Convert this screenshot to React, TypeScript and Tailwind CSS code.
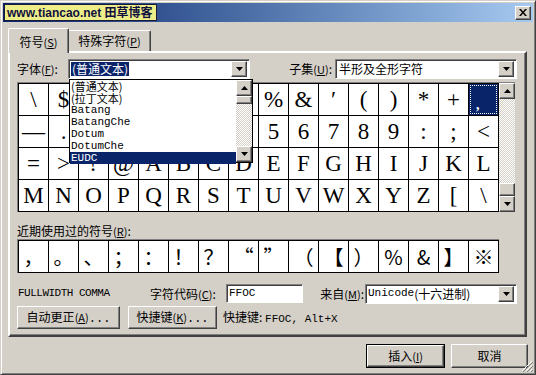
import React from 'react';

const cjk = "font-['Noto_Sans_CJK_SC',sans-serif]";
const mono = "font-['Liberation_Mono',monospace]";
const serif = "font-['Liberation_Serif',serif]";

const raised = 'border border-t-white border-l-white border-r-[#404040] border-b-[#404040] shadow-[inset_-1px_-1px_#808080]';
const sunken = 'border border-t-[#808080] border-l-[#808080] border-r-white border-b-white shadow-[inset_1px_1px_#404040]';
const checker = 'bg-[repeating-conic-gradient(#d4d0c8_0_25%,#ffffff_0_50%)] bg-[length:2px_2px]';

const rows = [
    ['\\', '$', '%', '@', '!', '"', '#', '$', '%', '&', '′', '(', ')', '*', '+', ','],
    ['—', '.', '/', '0', '1', '2', '3', '4', '5', '6', '7', '8', '9', ':', ';', '<'],
    ['=', '>', '?', '@', 'A', 'B', 'C', 'D', 'E', 'F', 'G', 'H', 'I', 'J', 'K', 'L'],
    ['M', 'N', 'O', 'P', 'Q', 'R', 'S', 'T', 'U', 'V', 'W', 'X', 'Y', 'Z', '[', '\\'],
];

const recent = ['，', '。', '、', '；', '：', '！', '？', '“', '”', '（', '【', '）', '%', '&', '】', '※'];

const fonts = ['(普通文本)', '(拉丁文本)', 'Batang', 'BatangChe', 'Dotum', 'DotumChe', 'EUDC'];

function Arrow({ dir }: { dir: 'up' | 'down' }) {
    return (
        <svg width="7" height="4" viewBox="0 0 7 4">
            {dir === 'down' ? <path d="M0 0h7L3.5 4z" fill="#000" /> : <path d="M0 4h7L3.5 0z" fill="#000" />}
        </svg>
    );
}

function ArrowBtn({ dir, className = '' }: { dir: 'up' | 'down'; className?: string }) {
    return (
        <div className={`w-[16px] h-[16px] bg-[#d4d0c8] flex items-center justify-center shrink-0 ${raised} ${className}`}>
            <Arrow dir={dir} />
        </div>
    );
}

function Acc({ k }: { k: string }) {
    return (
        <span className="text-[11px]">
            (<span className="underline">{k}</span>)
        </span>
    );
}

function Select({ width, children }: { width: string; children: React.ReactNode }) {
    return (
        <div className={`${width} h-[20px] bg-white flex items-center pl-[2px] pr-[2px] ${sunken}`}>
            <div className="flex-1 flex items-center whitespace-nowrap">{children}</div>
            <ArrowBtn dir="down" />
        </div>
    );
}

function Button({ width, children, isDefault = false }: { width: string; children: React.ReactNode; isDefault?: boolean }) {
    return (
        <div className={`${width} ${isDefault ? 'border border-black' : ''}`}>
            <div className={`h-full flex items-center justify-center bg-[#d4d0c8] ${raised}`}>{children}</div>
        </div>
    );
}

export default function App() {
    return (
        <div className={`relative w-[536px] h-[375px] bg-[#d4d0c8] overflow-hidden text-[12px] text-black ${cjk} border border-t-[#d4d0c8] border-l-[#d4d0c8] border-r-[#404040] border-b-[#404040] shadow-[inset_1px_1px_#fff,inset_-1px_-1px_#808080]`}>
            {/* title bar */}
            <div className="mt-[2px] mx-[2px] h-[19px] bg-linear-to-r from-[#0a246a] to-[#a6caf0] flex items-center justify-between">
                <div className="ml-[1px] h-[17px] w-[153px] bg-[#eeee88] border border-[#1a1a3a] flex items-center pl-[2px]">
                    <span className="whitespace-nowrap text-[12px] font-bold text-[#101040] leading-none font-['Liberation_Sans','Noto_Sans_CJK_SC',sans-serif]">www.tiancao.net 田草博客</span>
                </div>
                <div className={`mr-[2px] w-[16px] h-[14px] bg-[#d4d0c8] flex items-center justify-center ${raised}`}>
                    <svg width="8" height="7" viewBox="0 0 8 7">
                        <path d="M0 0h2l2 2.5L6 0h2L5 3.5 8 7H6L4 4.5 2 7H0l3-3.5z" fill="#000" />
                    </svg>
                </div>
            </div>

            {/* tabs */}
            <div className="pl-[7px] pt-[6px] flex items-end h-[29px]">
                <div className="relative z-10 -mb-[2px] h-[25px] w-[61px] bg-[#d4d0c8] border-t border-l border-t-white border-l-white border-r border-r-[#404040] shadow-[inset_-1px_0_#808080] rounded-t-[2px] flex items-start justify-center pt-[4px]">
                    <span>符号<Acc k="S" /></span>
                </div>
                <div className="h-[21px] w-[82px] border-t border-t-white border-r border-r-[#404040] shadow-[inset_-1px_0_#808080] rounded-tr-[2px] flex items-center justify-center">
                    <span>特殊字符<Acc k="P" /></span>
                </div>
            </div>

            {/* panel */}
            <div className="relative ml-[7px] w-[519px] h-[286px] border-2 border-t-white border-l-white border-r-[#404040] border-b-[#404040] shadow-[inset_-1px_-1px_#808080] pl-[7px] pr-[8px] pt-[6px] flex flex-col">
                <div className="flex items-center h-[20px]">
                    <span className="w-[51px]">字体<Acc k="F" />:</span>
                    <Select width="w-[182px]">
                        <span className="bg-[#0a246a] text-white px-[1px] leading-[14px]">(普通文本)</span>
                    </Select>
                    <span className="ml-auto mr-[3px]">子集<Acc k="U" />:</span>
                    <Select width="w-[182px]">
                        <span className="pl-[1px]">半形及全形字符</span>
                    </Select>
                </div>

                {/* symbol grid */}
                <div className="flex mt-[3px]">
                    <div className="border-l border-t border-[#808080]">
                        <div className={`border-l border-t border-black ${serif}`}>
                            {rows.map((row, r) => (
                                <div key={r} className="flex">
                                    {row.map((ch, c) => {
                                        const sel = r === 0 && c === 15;
                                        return sel ? (
                                            <div key={c} className="w-[30px] h-[32px] border-r border-b border-black bg-[#0a246a] p-[1px]">
                                                <div className="w-full h-full border border-dotted border-white flex items-end pl-[5px] pb-[1px]">
                                                    <span className="text-white text-[14px] font-bold leading-none">,</span>
                                                </div>
                                            </div>
                                        ) : (
                                            <div key={c} className="w-[30px] h-[32px] border-r border-b border-black bg-white flex items-center justify-center text-[23px] leading-none">
                                                {ch}
                                            </div>
                                        );
                                    })}
                                </div>
                            ))}
                        </div>
                    </div>
                    <div className="w-[16px] flex flex-col border-t border-[#808080]">
                        <ArrowBtn dir="up" />
                        <div className={`flex-1 ${checker}`} />
                        <div className={`h-[13px] bg-[#d4d0c8] ${raised}`} />
                        <ArrowBtn dir="down" />
                    </div>
                </div>

                <div className="mt-[11px] h-[15px] leading-[15px]">近期使用过的符号<Acc k="R" />:</div>

                <div className="mt-[1px] flex">
                    <div className="border-l border-t border-[#808080]">
                        <div className="flex border-l border-t border-black">
                            {recent.map((ch, i) => (
                                <div key={i} className="w-[30px] h-[32px] border-r border-b border-black bg-white flex items-center justify-center text-[20px] leading-none">
                                    {ch}
                                </div>
                            ))}
                        </div>
                    </div>
                </div>

                <div className="mt-[11px] flex items-center h-[19px]">
                    <span className={`${mono} text-[11px] tracking-[-0.5px] w-[133px] pl-[1px]`}>FULLWIDTH COMMA</span>
                    <span className="w-[76px]">字符代码<Acc k="C" />:</span>
                    <div className={`w-[77px] h-[19px] bg-white flex items-center pl-[2px] ${mono} text-[11px] ${sunken}`}>FFOC</div>
                    <span className="ml-auto mr-[1px]">来自<Acc k="M" />:</span>
                    <Select width="w-[152px]">
                        <span className={`${mono} text-[11px]`}>Unicode</span>
                        <span>(十六进制)</span>
                    </Select>
                </div>

                <div className="mt-[3px] flex items-center h-[23px]">
                    <Button width="w-[103px] h-[23px]">
                        <span>自动更正<Acc k="A" /><span className={mono}>...</span></span>
                    </Button>
                    <div className="ml-[8px]">
                        <Button width="w-[89px] h-[23px]">
                            <span>快捷键<Acc k="K" /><span className={mono}>...</span></span>
                        </Button>
                    </div>
                    <span className="ml-[6px]">
                        快捷键: <span className={`${mono} text-[11px]`}>FFOC, Alt+X</span>
                    </span>
                </div>

                {/* font dropdown list */}
                <div className="absolute z-20 left-[59px] top-[26px] w-[184px] h-[84px] bg-white border border-black flex">
                    <div className="flex-1 flex flex-col">
                        {fonts.map((f, i) => (
                            <div
                                key={f}
                                className={`h-[12px] leading-[12px] pl-[1px] ${i < 2 ? 'text-[11px]' : `${mono} text-[11px]`} ${i === 6 ? 'bg-[#0a246a] text-white' : ''}`}
                            >
                                {f}
                            </div>
                        ))}
                    </div>
                    <div className="w-[16px] flex flex-col">
                        <ArrowBtn dir="up" />
                        <div className={`h-[8px] bg-[#d4d0c8] ${raised}`} />
                        <div className={`flex-1 ${checker}`} />
                        <ArrowBtn dir="down" />
                    </div>
                </div>
            </div>

            {/* bottom buttons */}
            <div className="flex justify-end pr-[7px] mt-[7px] gap-[6px]">
                <Button width="w-[79px] h-[24px]" isDefault>
                    <span>插入<Acc k="I" /></span>
                </Button>
                <Button width="w-[77px] h-[24px]">
                    <span>取消</span>
                </Button>
            </div>

            <svg className="absolute right-[2px] bottom-[2px]" width="12" height="12" viewBox="0 0 12 12">
                <path d="M11 1L1 11M11 5L5 11M11 9L9 11" stroke="#fff" strokeWidth="1" />
                <path d="M12 2L2 12M12 6L6 12M12 10L10 12" stroke="#808080" strokeWidth="1" />
            </svg>
        </div>
    );
}
